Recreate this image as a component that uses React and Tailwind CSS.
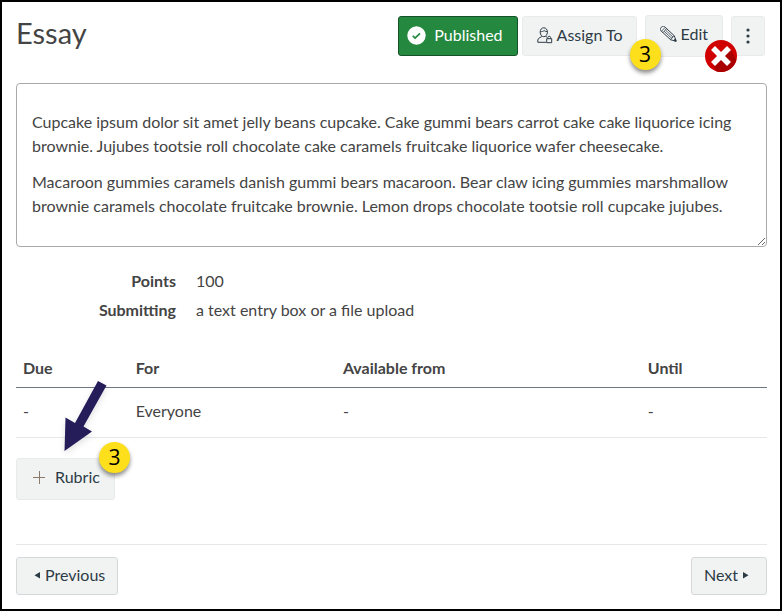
import clsx from 'clsx';

const paragraphs = [
  'Cupcake ipsum dolor sit amet jelly beans cupcake. Cake gummi bears carrot cake cake liquorice icing brownie. Jujubes tootsie roll chocolate cake caramels fruitcake liquorice wafer cheesecake.',
  'Macaroon gummies caramels danish gummi bears macaroon. Bear claw icing gummies marshmallow brownie caramels chocolate fruitcake brownie. Lemon drops chocolate tootsie roll cupcake jujubes.',
];

const details = [
  { label: 'Points', value: '100' },
  { label: 'Submitting', value: 'a text entry box or a file upload' },
];

const dates = [{ due: '-', who: 'Everyone', from: '-', until: '-' }];

function Button({ className, children, ...rest }) {
  return (
    <button
      type="button"
      className={clsx('flex items-center rounded-[3px] border whitespace-nowrap', className)}
      {...rest}
    >
      {children}
    </button>
  );
}

function StepBadge({ className, children }) {
  return (
    <span
      className={clsx(
        'absolute flex size-[31px] items-center justify-center rounded-full bg-[#fedf1b] font-[Open_Sans,sans-serif] text-[21px] leading-none text-black shadow-[0_3px_4px_rgba(0,0,0,0.45)]',
        className
      )}
    >
      {children}
    </span>
  );
}

function CheckIcon() {
  return (
    <svg width="19" height="19" viewBox="0 0 19 19" aria-hidden="true">
      <circle cx="9.5" cy="9.5" r="9.2" fill="#fff" />
      <path d="M5.8 9.9l2.3 2.2 4.9-4.8" fill="none" stroke="#24883e" strokeWidth="1.7" />
    </svg>
  );
}

function AssignIcon() {
  return (
    <svg width="16" height="17" viewBox="0 0 16 17" fill="none" stroke="#2d3b45" strokeWidth="1" aria-hidden="true">
      <path d="M3.2 5.2C3.2 2.4 4.7.8 6.8.8s3.6 1.6 3.6 4.4c0 2.6-1.6 4.5-3.6 4.5S3.2 7.8 3.2 5.2z" />
      <path d="M3.3 4.6c1.8.2 3-.3 3.8-1.1.8.8 1.9 1.2 3.2 1.2" />
      <path d="M4.9 9.2C4.8 10.3 1 10.6.8 13v2.3h8.4M8.8 9.2c.1.5.6.8 1.2 1" />
      <path d="M9.7 11.7h5v4h-5zM10.8 11.7v-1.2c0-1.7 2.8-1.7 2.8 0v1.2" />
    </svg>
  );
}

function PencilIcon() {
  return (
    <svg width="17" height="17" viewBox="0 0 17 17" fill="none" stroke="#2d3b45" strokeWidth="0.9" aria-hidden="true">
      <g transform="translate(2.6 2.6) rotate(43)">
        <path d="M0-2.7h13.5l5 2.7-5 2.7H0C-2.5 2.7-2.5-2.7 0-2.7z" />
        <path d="M1-2.7v5.4M3-2.7v5.4M3-.9h10.5M3 .9h10.5M13.5-2.7l-.6 1.8.6.9-.6.9.6 1.8" strokeWidth="0.7" />
        <path d="M16.3-1.2l2.2 1.2-2.2 1.2z" fill="#2d3b45" />
      </g>
    </svg>
  );
}

function CrossMark({ className }) {
  return (
    <svg className={className} width="32" height="32" viewBox="0 0 32 32" aria-hidden="true">
      <circle cx="16" cy="16" r="16" fill="#d00000" />
      <path d="M25 9l6.4 11A16 16 0 0 1 11 31.2L8 24z" fill="#a90000" />
      <path d="M8 8l16 16M24 8L8 24" stroke="#fff" strokeWidth="5.6" />
    </svg>
  );
}

function Arrow({ className }) {
  return (
    <svg className={clsx('drop-shadow-md', className)} width="44" height="72" viewBox="0 0 44 72" aria-hidden="true">
      <path d="M35 1L43.5 5.5 20.5 46.5 29 51.5 1.5 71 2.5 37.5 12 43z" fill="#251c5a" />
    </svg>
  );
}

export default function App() {
  return (
    <main className="border-2 border-black bg-white pt-[13px] pr-[13px] pb-3.5 pl-3.5 font-[Lato,sans-serif] text-base leading-6 text-[#444]">
      <header className="flex items-start justify-between">
        <h1 className="pt-0.5 text-[29px] leading-8">Essay</h1>
        <div className="flex items-center pr-0.5 text-[#2d3b45]">
          <Button className="h-10 gap-2 border-[#14532a] bg-[#24883e] pr-3.5 pb-0.5 pl-2 text-white">
            <CheckIcon />
            Published
          </Button>
          <Button className="ml-1 h-10 gap-1 border-[#e8eaec] bg-[#f1f3f3] pr-[13px] pb-0.5 pl-3.5">
            <AssignIcon />
            Assign To
          </Button>
          <div className="relative ml-2">
            <Button className="h-[42px] gap-1 border-[#e8eaec] bg-[#f1f3f3] px-3.5 pb-1">
              <PencilIcon />
              Edit
            </Button>
            <StepBadge className="top-6 -left-[15px]">3</StepBadge>
            <CrossMark className="absolute top-[25px] -right-3.5" />
          </div>
          <Button aria-label="More options" className="ml-2 h-10 w-[34px] justify-center border-[#e8eaec] bg-[#f1f3f3]">
            <svg width="4" height="16" viewBox="0 0 4 16" fill="#2d3b45" aria-hidden="true">
              <circle cx="2" cy="2" r="1.6" />
              <circle cx="2" cy="8" r="1.6" />
              <circle cx="2" cy="14" r="1.6" />
            </svg>
          </Button>
        </div>
      </header>

      <section className="mt-[26px] resize space-y-3 overflow-hidden rounded-[4px] border border-[#aaa] px-[15px] pt-[26px] pb-7">
        {paragraphs.map((text) => (
          <p key={text}>{text}</p>
        ))}
      </section>

      <dl className="mt-[22px] grid grid-cols-[160px_1fr] gap-x-5 gap-y-[5px]">
        {details.map(({ label, value }) => (
          <div key={label} className="contents">
            <dt className="text-right font-bold">{label}</dt>
            <dd>{value}</dd>
          </div>
        ))}
      </dl>

      <table className="mt-[26px] w-full table-fixed text-left">
        <thead>
          <tr className="border-b border-[#6b7780]">
            <th className="w-[15%] px-[7px] pt-2 pb-[7px]">Due</th>
            <th className="w-[27.6%] px-[7px] pt-2 pb-[7px]">For</th>
            <th className="w-[40.6%] px-[7px] pt-2 pb-[7px]">Available from</th>
            <th className="px-[7px] pt-2 pb-[7px]">Until</th>
          </tr>
        </thead>
        <tbody>
          {dates.map((row) => (
            <tr key={row.who} className="border-b border-[#e5e7e9]">
              <td className="px-[7px] pt-[11px] pb-3.5">{row.due}</td>
              <td className="px-[7px] pt-[11px] pb-3.5">{row.who}</td>
              <td className="px-[7px] pt-[11px] pb-3.5">{row.from}</td>
              <td className="px-[7px] pt-[11px] pb-3.5">{row.until}</td>
            </tr>
          ))}
        </tbody>
      </table>

      <div className="relative mt-5 w-fit text-[#2d3b45]">
        <Button className="h-[42px] gap-2.5 border-[#e8eaec] bg-[#f1f3f3] px-3.5 pb-1">
          <svg width="14" height="14" viewBox="0 0 14 14" stroke="#8a7a6c" aria-hidden="true">
            <path d="M8.5 1v13M2 7.5h12" />
          </svg>
          Rubric
        </Button>
        <Arrow className="absolute -top-[78px] left-[47px]" />
        <StepBadge className="-top-4 -right-[15px]">3</StepBadge>
      </div>

      <nav className="mt-11 flex justify-between border-t border-[#e5e7e9] pt-3 text-[#2d3b45]">
        <Button className="h-[38px] gap-1 border-[#d5d9dc] bg-[#f1f3f3] pr-3 pb-0.5 pl-4">
          <svg width="8" height="8" viewBox="0 0 8 8" fill="#2d3b45" aria-hidden="true">
            <path d="M7 1v6.5L1.5 4.3z" />
          </svg>
          Previous
        </Button>
        <Button className="h-[38px] gap-1 border-[#d5d9dc] bg-[#f1f3f3] pr-4 pb-0.5 pl-3">
          Next
          <svg width="8" height="8" viewBox="0 0 8 8" fill="#2d3b45" aria-hidden="true">
            <path d="M1 1v6.5l5.5-3.2z" />
          </svg>
        </Button>
      </nav>
    </main>
  );
}
